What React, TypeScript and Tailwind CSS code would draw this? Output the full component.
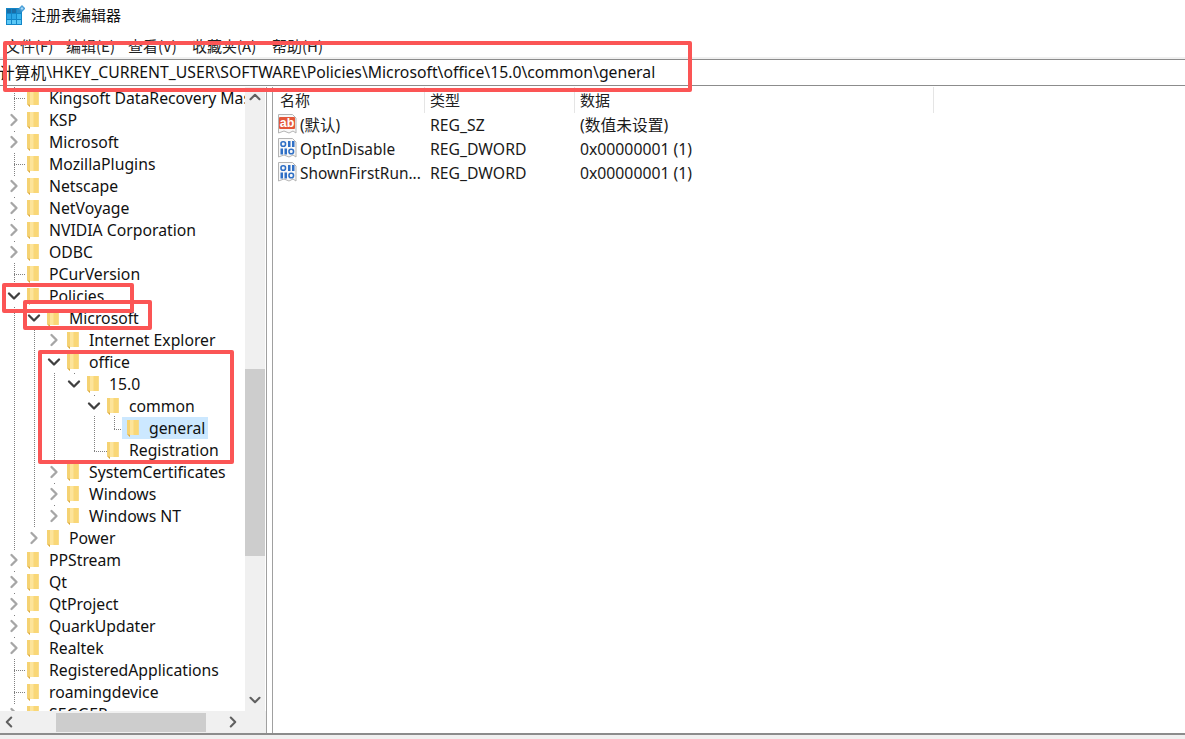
import type { ReactNode } from "react";
import { ChevronDown, ChevronRight, ChevronUp, ChevronLeft } from "lucide-react";

type Row = { label: string; depth: number; arrow?: "open" | "closed"; selected?: boolean };

const rows: Row[] = [
  { label: "Kingsoft DataRecovery Master", depth: 0 },
  { label: "KSP", depth: 0, arrow: "closed" },
  { label: "Microsoft", depth: 0, arrow: "closed" },
  { label: "MozillaPlugins", depth: 0 },
  { label: "Netscape", depth: 0, arrow: "closed" },
  { label: "NetVoyage", depth: 0, arrow: "closed" },
  { label: "NVIDIA Corporation", depth: 0, arrow: "closed" },
  { label: "ODBC", depth: 0, arrow: "closed" },
  { label: "PCurVersion", depth: 0 },
  { label: "Policies", depth: 0, arrow: "open" },
  { label: "Microsoft", depth: 1, arrow: "open" },
  { label: "Internet Explorer", depth: 2, arrow: "closed" },
  { label: "office", depth: 2, arrow: "open" },
  { label: "15.0", depth: 3, arrow: "open" },
  { label: "common", depth: 4, arrow: "open" },
  { label: "general", depth: 5, selected: true },
  { label: "Registration", depth: 4 },
  { label: "SystemCertificates", depth: 2, arrow: "closed" },
  { label: "Windows", depth: 2, arrow: "closed" },
  { label: "Windows NT", depth: 2, arrow: "closed" },
  { label: "Power", depth: 1, arrow: "closed" },
  { label: "PPStream", depth: 0, arrow: "closed" },
  { label: "Qt", depth: 0, arrow: "closed" },
  { label: "QtProject", depth: 0, arrow: "closed" },
  { label: "QuarkUpdater", depth: 0, arrow: "closed" },
  { label: "Realtek", depth: 0, arrow: "closed" },
  { label: "RegisteredApplications", depth: 0 },
  { label: "roamingdevice", depth: 0 },
  { label: "SEGGER", depth: 0, arrow: "closed" },
];

const indent = ["pl-[6px]", "pl-[26px]", "pl-[46px]", "pl-[66px]", "pl-[86px]", "pl-[106px]"];

const menus = [
  { label: "文件(F)", width: "w-[61px]" },
  { label: "编辑(E)", width: "w-[62px]" },
  { label: "查看(V)", width: "w-[64px]" },
  { label: "收藏夹(A)", width: "w-[80px]" },
  { label: "帮助(H)", width: "w-[60px]" },
];

const FolderIcon = () => (
  <svg width="12" height="17" viewBox="0 0 12 17" className="shrink-0">
    <path d="M0 0h11.500v15H3z" fill="#e9bd55" />
    <path d="M0 0h3v17L0 14z" fill="#f5d272" />
    <path d="M3 0h8.500v15H3z" fill="#fde49a" />
    <path d="M6.500 0h5v15h-5z" fill="#f9d777" />
    <path d="M0 14l3 3v-2z" fill="#d9a83f" />
  </svg>
);

const AppIcon = () => (
  <svg width="20" height="20" viewBox="0 0 20 20" className="shrink-0">
    <rect x="1" y="3" width="16" height="17" fill="#1286c8" />
    <g fill="#1b6ea6">
      <rect x="2" y="4" width="4" height="4" />
      <rect x="7" y="4" width="4" height="4" />
      <rect x="12" y="4" width="4" height="4" fill="#2a8cc8" />
    </g>
    <g fill="#2ba6e6">
      <rect x="2" y="9" width="4" height="5" />
      <rect x="7" y="9" width="4" height="5" />
      <rect x="12" y="9" width="4" height="5" fill="#37b4ee" />
    </g>
    <g fill="#5cc8f5">
      <rect x="2" y="15" width="4" height="4" />
      <rect x="7" y="15" width="4" height="4" />
      <rect x="12" y="15" width="4" height="4" />
    </g>
    <path d="M17 0l3.500 3.500L17 7l-3.500-3.500z" fill="#4a9fd8" />
    <path d="M17 2l1.500 1.500L17 5l-1.500-1.500z" fill="#a8d8f5" />
  </svg>
);

const PageShape = () => (
  <path d="M.5.5h14l3.500 3.500v15l-3-2-4 2-5-2-5.500 2z" fill="#f8f8f8" stroke="#b4b4b4" strokeWidth="1" />
);

const StringIcon = () => (
  <svg width="20" height="22" viewBox="0 0 20 22" className="shrink-0">
    <PageShape />
    <rect x="1" y="3" width="16" height="12" rx="1" fill="#e4583a" />
    <text x="9" y="13" fontSize="12.500" fontWeight="700" fontFamily="Liberation Sans, sans-serif" fill="#fff" textAnchor="middle">ab</text>
  </svg>
);

const BinaryIcon = () => (
  <svg width="20" height="22" viewBox="0 0 20 22" className="shrink-0">
    <PageShape />
    <g fill="#2f6fc5">
      <rect x="10" y="3" width="2.500" height="6" />
      <rect x="14" y="3" width="2.500" height="6" />
      <rect x="2.500" y="10.500" width="2.500" height="6" />
      <rect x="6.500" y="10.500" width="2.500" height="6" />
    </g>
    <g fill="none" stroke="#2f6fc5" strokeWidth="1.600">
      <rect x="3" y="3.800" width="4.500" height="4.500" rx="2" />
      <rect x="11" y="11.300" width="4.500" height="4.500" rx="2" />
    </g>
  </svg>
);

const TreeRow = ({ row }: { row: Row }) => (
  <div className={`flex h-[22px] shrink-0 items-center whitespace-nowrap ${indent[row.depth]}`}>
    <span className={`flex h-5 w-4 shrink-0 items-center justify-center ${row.arrow ? "bg-white" : ""}`}>
      {row.arrow === "closed" && <ChevronRight size={20} strokeWidth={2.8} className="shrink-0 text-[#a6a6a6]" />}
      {row.arrow === "open" && <ChevronDown size={20} strokeWidth={2.8} className="shrink-0 text-[#404040]" />}
    </span>
    {row.selected ? (
      <span className="flex h-[22px] items-center bg-[#cce8ff] pl-[5px] pr-[3px]">
        <FolderIcon />
        <span className="ml-[10px] pt-[2px]">{row.label}</span>
      </span>
    ) : (
      <span className="ml-[5px] flex items-center">
        <FolderIcon />
        <span className="ml-[10px] pt-[2px]">{row.label}</span>
      </span>
    )}
  </div>
);

const TreeGuides = () => (
  <svg width="245" height="624" className="absolute left-0 top-0" stroke="#808080" strokeDasharray="1 1" fill="none">
    <path d="M14.500 0V624" />
    <path d="M14 11.500h11M14 77.500h11M14 187.500h11M14 583.500h11M14 605.500h11" />
    <path d="M34.500 243V452" />
    <path d="M54.500 286V430" />
    <path d="M74.500 286v1M94.500 308v1" />
    <path d="M94.500 329V364M94 364.500h13" />
    <path d="M114.500 329V342M114 342.500h8" />
  </svg>
);

const ValueRow = ({ icon, name, type, data }: { icon: ReactNode; name: string; type: string; data: string }) => (
  <div className="flex h-[24px] items-center whitespace-nowrap text-[#1a1a1a]">
    <span className="-ml-[2px] flex w-[152px] items-center gap-[2px]">
      {icon}
      <span className="pt-[2px] text-[15.400px]">{name}</span>
    </span>
    <span className="w-[150px] pt-[2px]">{type}</span>
    <span className="pt-[2px]">{data}</span>
  </div>
);

export default function App() {
  return (
    <div className="relative flex h-[739px] w-[1185px] flex-col overflow-hidden bg-white font-['Noto_Sans','Noto_Sans_CJK_SC',sans-serif] text-[15.750px] text-[#111]">
      <header className="flex h-[30px] shrink-0 items-center pl-[5px]">
        <AppIcon />
        <span className="ml-[6px] font-['Noto_Sans_CJK_SC',sans-serif] text-[15px]">注册表编辑器</span>
      </header>

      <nav className="flex h-[27px] shrink-0 items-center pl-[5px] pt-[6px] font-['Noto_Sans_CJK_SC',sans-serif] text-[15px] text-[#222]">
        {menus.map((m) => (
          <span key={m.label} className={`shrink-0 ${m.width}`}>{m.label}</span>
        ))}
      </nav>

      <div className="h-[2px] shrink-0 bg-[#f0f0f0]" />
      <div className="flex h-[27px] shrink-0 items-center border-y border-y-[#8c8c8c] leading-none">
        <span className="-ml-px font-['Noto_Sans_CJK_SC',sans-serif]">计算机</span>
        <span>\HKEY_CURRENT_USER\SOFTWARE\Policies\Microsoft\office\15.0\common\general</span>
      </div>
      <div className="h-px shrink-0 bg-white" />

      <main className="flex min-h-0 flex-1">
        <div className="flex w-[266px] shrink-0 flex-col">
          <div className="flex min-h-0 flex-1">
            <div className="relative w-[245px] shrink-0 overflow-hidden">
              <TreeGuides />
              <div className="relative flex flex-col">
                {rows.map((row, i) => (
                  <TreeRow key={i} row={row} />
                ))}
              </div>
            </div>
            <div className="flex w-[20px] shrink-0 flex-col items-center bg-[#f0f0f0]">
              <div className="flex h-[20px] shrink-0 items-center justify-center">
                <ChevronUp size={18} strokeWidth={2.8} className="text-[#606060]" />
              </div>
              <div className="mt-[262px] h-[187px] w-full bg-[#cdcdcd]" />
              <div className="mt-auto flex h-[22px] shrink-0 items-center justify-center">
                <ChevronDown size={18} strokeWidth={2.8} className="text-[#606060]" />
              </div>
            </div>
          </div>
          <div className="flex h-[22px] shrink-0 items-center bg-[#f0f0f0]">
            <div className="flex w-[18px] shrink-0 justify-center">
              <ChevronLeft size={18} strokeWidth={2.8} className="text-[#606060]" />
            </div>
            <div className="ml-[38px] h-[19px] w-[150px] bg-[#cdcdcd]" />
            <div className="ml-[18px] flex w-[18px] shrink-0 justify-center">
              <ChevronRight size={18} strokeWidth={2.8} className="text-[#606060]" />
            </div>
          </div>
        </div>

        <div className="w-[7px] shrink-0 border-x border-x-[#a0a0a0] bg-white" />

        <section className="min-w-0 flex-1 pl-[7px]">
          <div className="flex h-[26px] w-[660px] items-center font-['Noto_Sans_CJK_SC',sans-serif] text-[15px] text-[#222]">
            <span className="h-full w-[145px] border-r border-r-[#e5e5e5] leading-[26px]">名称</span>
            <span className="h-full w-[150px] border-r border-r-[#e5e5e5] pl-[5px] leading-[26px]">类型</span>
            <span className="h-full w-[359px] border-r border-r-[#e5e5e5] pl-[5px] leading-[26px]">数据</span>
          </div>
          <div className="flex flex-col">
            <ValueRow icon={<StringIcon />} name="(默认)" type="REG_SZ" data="(数值未设置)" />
            <ValueRow icon={<BinaryIcon />} name="OptInDisable" type="REG_DWORD" data="0x00000001 (1)" />
            <ValueRow icon={<BinaryIcon />} name="ShownFirstRun..." type="REG_DWORD" data="0x00000001 (1)" />
          </div>
        </section>
      </main>

      <div className="h-[6px] shrink-0 border-t-2 border-t-[#8c8c8c] bg-[#f0f0f0]" />

      {/* red annotation boxes */}
      <div className="absolute left-[3px] top-[41px] h-[51px] w-[689px] rounded-[2px] border-4 border-[#fb5555]" />
      <div className="absolute left-[2px] top-[283px] h-[30px] w-[132px] rounded-[2px] border-4 border-[#fb5555]" />
      <div className="absolute left-[23px] top-[300px] h-[30px] w-[129px] rounded-[2px] border-4 border-[#fb5555]" />
      <div className="absolute left-[38px] top-[350px] h-[114px] w-[196px] rounded-[2px] border-4 border-[#fb5555]" />
    </div>
  );
}
